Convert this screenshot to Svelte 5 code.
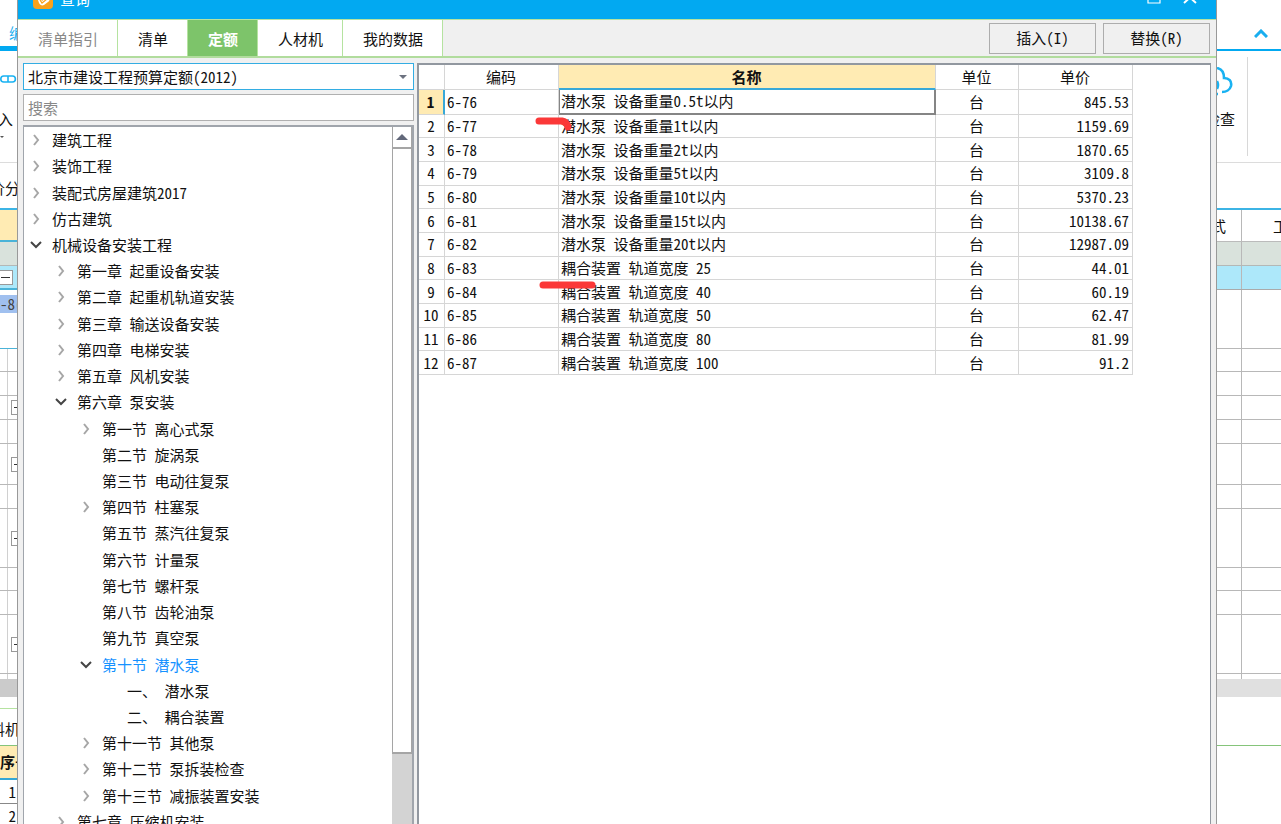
<script lang="ts">
  type TreeNode = {
    label: string;
    level: number;
    state?: 'open' | 'closed';
    active?: boolean;
  };

  type Quota = { code: string; name: string; unit: string; price: string };

  const tabs = [
    { id: 'guide', label: '清单指引', muted: true },
    { id: 'list', label: '清单' },
    { id: 'quota', label: '定额' },
    { id: 'labor', label: '人材机' },
    { id: 'mine', label: '我的数据' },
  ];

  const tree: TreeNode[] = [
    { label: '建筑工程', level: 0, state: 'closed' },
    { label: '装饰工程', level: 0, state: 'closed' },
    { label: '装配式房屋建筑2017', level: 0, state: 'closed' },
    { label: '仿古建筑', level: 0, state: 'closed' },
    { label: '机械设备安装工程', level: 0, state: 'open' },
    { label: '第一章 起重设备安装', level: 1, state: 'closed' },
    { label: '第二章 起重机轨道安装', level: 1, state: 'closed' },
    { label: '第三章 输送设备安装', level: 1, state: 'closed' },
    { label: '第四章 电梯安装', level: 1, state: 'closed' },
    { label: '第五章 风机安装', level: 1, state: 'closed' },
    { label: '第六章 泵安装', level: 1, state: 'open' },
    { label: '第一节 离心式泵', level: 2, state: 'closed' },
    { label: '第二节 旋涡泵', level: 2 },
    { label: '第三节 电动往复泵', level: 2 },
    { label: '第四节 柱塞泵', level: 2, state: 'closed' },
    { label: '第五节 蒸汽往复泵', level: 2 },
    { label: '第六节 计量泵', level: 2 },
    { label: '第七节 螺杆泵', level: 2 },
    { label: '第八节 齿轮油泵', level: 2 },
    { label: '第九节 真空泵', level: 2 },
    { label: '第十节 潜水泵', level: 2, state: 'open', active: true },
    { label: '一、 潜水泵', level: 3 },
    { label: '二、 耦合装置', level: 3 },
    { label: '第十一节 其他泵', level: 2, state: 'closed' },
    { label: '第十二节 泵拆装检查', level: 2, state: 'closed' },
    { label: '第十三节 减振装置安装', level: 2, state: 'closed' },
    { label: '第七章 压缩机安装', level: 1, state: 'closed' },
  ];

  const quotas: Quota[] = [
    { code: '6-76', name: '潜水泵 设备重量0.5t以内', unit: '台', price: '845.53' },
    { code: '6-77', name: '潜水泵 设备重量1t以内', unit: '台', price: '1159.69' },
    { code: '6-78', name: '潜水泵 设备重量2t以内', unit: '台', price: '1870.65' },
    { code: '6-79', name: '潜水泵 设备重量5t以内', unit: '台', price: '3109.8' },
    { code: '6-80', name: '潜水泵 设备重量10t以内', unit: '台', price: '5370.23' },
    { code: '6-81', name: '潜水泵 设备重量15t以内', unit: '台', price: '10138.67' },
    { code: '6-82', name: '潜水泵 设备重量20t以内', unit: '台', price: '12987.09' },
    { code: '6-83', name: '耦合装置 轨道宽度 25', unit: '台', price: '44.01' },
    { code: '6-84', name: '耦合装置 轨道宽度 40', unit: '台', price: '60.19' },
    { code: '6-85', name: '耦合装置 轨道宽度 50', unit: '台', price: '62.47' },
    { code: '6-86', name: '耦合装置 轨道宽度 80', unit: '台', price: '81.99' },
    { code: '6-87', name: '耦合装置 轨道宽度 100', unit: '台', price: '91.2' },
  ];

  // rows of the sheet behind the dialog, seen on both sides of it
  const sheetRows = [
    { height: 23 },
    { height: 24 },
    { height: 24, fold: true },
    { height: 24 },
    { height: 41, fold: true },
    { height: 24 },
    { height: 59, fold: true },
    { height: 23 },
    { height: 24 },
    { height: 59, fold: true },
  ];

  let activeTab = $state('quota');
  let selectedRow = $state(0);
  let library = $state('北京市建设工程预算定额(2012)');
  let keyword = $state('');
</script>

<div class="screen">
  <aside class="behind left">
    <div class="menu"><span>编制</span></div>
    <div class="tools">
      <svg width="17" height="10" viewBox="0 0 17 10" fill="none" stroke="#19b2f2" stroke-width="1.6" aria-hidden="true">
        <rect x="0.8" y="2" width="14.6" height="6" rx="3" />
        <path d="M8 2v6" />
      </svg>
      <span>导入</span>
      <svg class="drop" width="6" height="4" viewBox="0 0 6 4" aria-hidden="true"><path d="M0 0h4L2 2z" fill="#555" /></svg>
    </div>
    <div class="subtabs"><span>价分</span></div>
    <div class="head"></div>
    <div class="total"></div>
    <div class="current"><i class="fold"></i></div>
    <div class="editing"><span>-8(</span></div>
    {#each sheetRows as row}
      <div class="sheetRow" style:height="{row.height}px">
        {#if row.fold}<i class="fold"></i>{/if}
      </div>
    {/each}
    <div class="sheetEnd"></div>
    <div class="hscroll"></div>
    <div class="lowerTabs"><span>料机</span></div>
    <div class="lowerHead">序号</div>
    <div class="num">1</div>
    <div class="num">2</div>
  </aside>

  <main class="dialog">
    <header class="titlebar">
      <div class="caption">
        <svg width="20" height="20" viewBox="0 0 20 20" aria-hidden="true">
          <rect width="20" height="20" rx="4" fill="#f8a21c" />
          <path d="M4 8l2 6c1 2 3 3 5 2l4-3c2-1 2-4 1-6l-7 5-2-3z" fill="#fff" />
          <path d="M7 11l2 3 5-4" fill="none" stroke="#f8a21c" stroke-width="1.2" />
        </svg>
        <h1>查询</h1>
        <button class="winButton" type="button" aria-label="最大化">
          <svg width="14" height="14" viewBox="0 0 14 14"><path d="M1 1h12v10H1z" fill="none" stroke="#fff" stroke-width="1.2" /></svg>
        </button>
        <button class="winButton" type="button" aria-label="关闭">
          <svg width="14" height="14" viewBox="0 0 14 14"><path d="M1 0l12 11M13 0L1 11" fill="none" stroke="#fff" stroke-width="2" /></svg>
        </button>
      </div>
    </header>

    <nav class="tabbar">
      {#each tabs as tab}
        <button
          class="tab"
          class:muted={tab.muted}
          class:selected={tab.id === activeTab}
          type="button"
          onclick={() => (activeTab = tab.id)}
        >{tab.label}</button>
      {/each}
      <div class="actions">
        <button class="action" type="button">插入(I)</button>
        <button class="action" type="button">替换(R)</button>
      </div>
    </nav>

    <div class="body">
      <section class="side">
        <div class="selectWrap">
          <select class="select" aria-label="定额库" bind:value={library}>
            <option>北京市建设工程预算定额(2012)</option>
          </select>
          <svg class="caret" width="8" height="4" viewBox="0 0 8 4" aria-hidden="true"><path d="M0 0h8L4 4z" fill="#6c7280" /></svg>
        </div>
        <input class="search" type="text" placeholder="搜索" aria-label="搜索" bind:value={keyword} />

        <div class="treeBox">
          <ul class="tree">
            {#each tree as node}
              <li>
                <button class="node level{node.level}" class:active={node.active} type="button">
                  <svg class="twist" width="12" height="12" viewBox="0 0 12 12" fill="none" stroke-width="2" aria-hidden="true">
                    {#if node.state === 'closed'}
                      <path d="M4 1l4 5-4 5" stroke="#a6a6a6" />
                    {:else if node.state === 'open'}
                      <path d="M1 3l5 5 5-5" stroke="#454545" />
                    {/if}
                  </svg>
                  {node.label}
                </button>
              </li>
            {/each}
          </ul>
          <div class="scrollbar">
            <button class="scrollUp" type="button" aria-label="向上滚动">
              <svg width="12" height="6" viewBox="0 0 12 6"><path d="M0 6h12L6 0z" fill="#62687a" /></svg>
            </button>
            <div class="thumb"></div>
          </div>
        </div>
      </section>

      <section class="grid">
        <table>
          <colgroup>
            <col class="colNo" />
            <col class="colCode" />
            <col class="colName" />
            <col class="colUnit" />
            <col class="colPrice" />
          </colgroup>
          <thead>
            <tr>
              <th></th>
              <th>编码</th>
              <th class="sorted">名称</th>
              <th>单位</th>
              <th>单价</th>
            </tr>
          </thead>
          <tbody>
            {#each quotas as quota, i}
              <tr class:picked={i === selectedRow} onclick={() => (selectedRow = i)}>
                <td class="no">{i + 1}</td>
                <td>{quota.code}</td>
                <td class="name">{quota.name}</td>
                <td class="unit">{quota.unit}</td>
                <td class="price">{quota.price}</td>
              </tr>
            {/each}
          </tbody>
        </table>
        <!-- red pen strokes over the code and name columns -->
        <svg class="marks" width="240" height="240" viewBox="0 0 240 240" fill="none" stroke="#fb3838" stroke-width="7" stroke-linecap="round" stroke-linejoin="round" aria-hidden="true">
          <path d="M120 56h23q5 1 6 6" />
          <path d="M124 220h49" />
        </svg>
      </section>
    </div>
  </main>

  <aside class="behind right">
    <div class="menu">
      <svg width="14" height="9" viewBox="0 0 14 9" fill="none" stroke="#19aeef" stroke-width="3" aria-hidden="true"><path d="M1 8l6-6 6 6" /></svg>
    </div>
    <div class="tools">
      <div class="check">
        <svg width="30" height="32" viewBox="0 0 30 32" fill="none" stroke="#19b2f2" stroke-width="2.6" aria-hidden="true">
          <path d="M0 1c5 1 7 5 7 10 5 0 8 3 7 8-1 4-5 6-9 6" />
          <path d="M0 14q2 4 0 8M0 27h1" />
        </svg>
        <span>检查</span>
      </div>
    </div>
    <div class="subtabs"></div>
    <div class="head cells"><span>式</span><span>工</span></div>
    <div class="total cells"><span></span><span></span></div>
    <div class="current cells"><span></span><span></span></div>
    <div class="editing cells"><span></span><span></span></div>
    {#each sheetRows as row}
      <div class="sheetRow cells" style:height="{row.height}px"><span></span><span></span></div>
    {/each}
    <div class="sheetEnd cells"><span></span><span></span></div>
    <div class="hscroll"></div>
    <div class="lowerTabs"></div>
  </aside>
</div>

<style>
  :global(body) {
    background: #fff;
  }

  .screen,
  .screen * {
    box-sizing: border-box;
  }

  .screen {
    display: grid;
    grid-template-columns: 17px minmax(0, 1fr) 64px;
    height: 100vh;
    overflow: hidden;
    font-family: 'Noto Sans Mono CJK SC', 'Liberation Mono', 'Noto Sans CJK SC', monospace;
    font-size: 15px;
    line-height: 20px;
    color: #111;
  }

  button,
  input,
  select {
    font: inherit;
    color: inherit;
    margin: 0;
    padding: 0;
    border: 0;
    border-radius: 0;
    background: none;
  }

  svg {
    display: block;
    flex: none;
  }

  /* application window behind the dialog */
  .behind {
    min-width: 0;
    overflow: hidden;
  }

  .behind > div {
    display: flex;
    align-items: center;
    overflow: hidden;
    white-space: nowrap;
  }

  .behind .menu {
    height: 51px;
    align-items: flex-end;
    border-bottom: 2px solid #02a9f1;
  }

  .left .menu {
    padding: 0 0 3px 9px;
    border-bottom-width: 5px;
    color: #19aeef;
  }

  .right .menu {
    justify-content: flex-end;
    padding: 0 13px 11px 0;
  }

  .behind .tools {
    height: 112px;
    border-bottom: 1px solid #dcdcdc;
  }

  .left .tools {
    flex-direction: column;
    align-items: flex-end;
    padding-top: 23px;
    gap: 25px;
  }

  .left .tools span {
    padding-right: 4px;
  }

  .left .tools .drop {
    align-self: flex-start;
    margin-top: -18px;
  }

  .right .tools {
    padding: 6px 0;
    align-items: stretch;
  }

  .check {
    display: flex;
    flex-direction: column;
    align-items: flex-end;
    width: 31px;
    padding: 10px 12px 0 0;
    gap: 10px;
    border-right: 1px solid #d8d8d8;
  }

  .check svg {
    margin-right: -12px;
  }

  .behind .subtabs {
    height: 47px;
    justify-content: flex-end;
    padding-top: 4px;
    border-bottom: 2px solid #3cb4e5;
  }

  /* labels that run on under the dialog's edge */
  .subtabs span,
  .lowerTabs span {
    margin-right: -3px;
  }

  .behind .head {
    height: 32px;
    border-bottom: 1px solid #bbb;
  }

  .left .head {
    background: #ffebb3;
    border-bottom: 2px solid #4ab3d8;
  }

  .behind .total {
    height: 24px;
    background: #d9e2dc;
    border-bottom: 1px solid #b4b8b6;
  }

  .behind .current {
    height: 24px;
    background: #ade8fa;
    border-bottom: 1px solid #aaa;
  }

  .left .current {
    border-bottom: 2px solid #4ab3d8;
  }

  .left .current .fold {
    margin-left: -2px;
  }

  .behind .editing {
    height: 59px;
    border-bottom: 1px solid #b8b8b8;
  }

  .left .editing {
    align-items: flex-start;
    padding-top: 5px;
    border-bottom-color: #4ab3d8;
  }

  .left .editing span {
    flex: none;
    width: 24px;
    line-height: 18px;
    background: #a0c0ef;
    color: #444;
  }

  .behind .sheetRow {
    border-bottom: 1px solid #b8b8b8;
  }

  .left .sheetRow,
  .left .sheetEnd {
    padding-left: 11px;
    background: linear-gradient(#d0d0d0, #d0d0d0) 7px 0 / 1px 100% no-repeat;
  }

  .fold {
    flex: none;
    width: 15px;
    height: 15px;
    border: 1px solid #999;
    background: linear-gradient(#333, #333) center / 9px 1px no-repeat #fff;
  }

  .behind .sheetEnd {
    height: 5px;
  }

  .behind .hscroll {
    height: 18px;
    background: #e0e0e0;
  }

  .left .hscroll {
    background: #cbcbcb;
  }

  .behind .lowerTabs {
    height: 49px;
    justify-content: flex-end;
    padding-top: 16px;
    border-bottom: 1px solid #85c47a;
  }

  .left .lowerTabs {
    background: linear-gradient(#b5e3a0, #b5e3a0) 0 11px / 100% 1px no-repeat;
  }

  .behind .lowerHead {
    height: 34px;
    background: #ffebb3;
    border-bottom: 2px solid #35a7d5;
    font-weight: bold;
  }

  .behind .num {
    height: 24px;
    justify-content: flex-end;
    padding-right: 1px;
    border-bottom: 1px solid #888;
  }

  .cells span {
    align-self: stretch;
    display: flex;
    flex: 1;
    align-items: center;
    padding-left: 31px;
  }

  .cells span:first-child {
    flex: 0 0 25px;
    justify-content: flex-end;
    overflow: hidden;
    padding: 0 15px 0 0;
    border-right: 1px solid #b8b8b8;
  }

  /* dialog */
  .dialog {
    display: flex;
    flex-direction: column;
    min-width: 0;
    min-height: 0;
    background: #f0f0f0;
    border: solid #999;
    border-width: 0 1px;
  }

  .titlebar {
    display: flex;
    align-items: flex-end;
    flex: none;
    height: 19px;
    overflow: hidden;
    background: #02a9f1;
    color: #fff;
  }

  .caption {
    display: flex;
    align-items: center;
    flex: 1;
    height: 40px;
    padding: 0 19px 0 15px;
  }

  h1 {
    flex: 1;
    margin: 0 0 0 7px;
    font-size: 15px;
    font-weight: normal;
  }

  .winButton {
    margin-left: 22px;
  }

  .tabbar {
    display: flex;
    flex: none;
    height: 39px;
    border-top: 1px solid #b5e3a0;
    border-bottom: 2px solid #b1dc9d;
  }

  .tab {
    padding: 2px 19px 0 20px;
    background: #fff;
    border-right: 1px solid #b5e3a0;
    white-space: nowrap;
  }

  .tab.muted {
    color: #888;
  }

  .tab.selected {
    background: #7dc46a;
    color: #fff;
    font-weight: bold;
  }

  .actions {
    display: flex;
    align-items: center;
    gap: 7px;
    margin-left: auto;
    padding-right: 6px;
  }

  .action {
    width: 107px;
    height: 31px;
    border: 1px solid #adadad;
  }

  .body {
    display: flex;
    flex: 1;
    min-height: 0;
    gap: 3px;
    padding: 5px 5px 0;
  }

  .side {
    display: flex;
    flex-direction: column;
    flex: none;
    width: 391px;
    gap: 4px;
  }

  .selectWrap {
    display: grid;
    align-items: center;
    height: 27px;
    border: 1px solid #33ade3;
    background: #fff;
  }

  .select,
  .caret {
    grid-area: 1 / 1;
  }

  .select {
    appearance: none;
    height: 25px;
    padding: 0 4px;
    border: 0;
    outline: none;
  }

  .caret {
    justify-self: end;
    margin-right: 6px;
    pointer-events: none;
  }

  .search {
    flex: none;
    height: 27px;
    padding: 0 4px;
    border: 1px solid #b0b0b0;
    background: #fff;
  }

  .search::placeholder {
    color: #888;
    opacity: 1;
  }

  .treeBox {
    display: flex;
    flex: 1;
    min-height: 0;
    overflow: hidden;
    background: #fff;
    border: solid #a0a5ac;
    border-width: 2px 2px 0 1px;
  }

  .tree {
    display: grid;
    grid-auto-rows: 1fr;
    flex: 1;
    height: 708px;
    margin: 0;
    padding: 0;
    list-style: none;
  }

  .node {
    display: flex;
    align-items: center;
    width: 100%;
    height: 100%;
    gap: 10px;
    white-space: nowrap;
    text-align: left;
  }

  .level0 {
    padding-left: 6px;
  }

  .level1 {
    padding-left: 31px;
  }

  .level2 {
    padding-left: 56px;
  }

  .level3 {
    padding-left: 81px;
  }

  .node.active {
    color: #1592ff;
  }

  .scrollbar {
    display: flex;
    flex-direction: column;
    flex: none;
    width: 20px;
    background: #d3d3d3;
  }

  .scrollUp {
    display: grid;
    place-items: center;
    flex: none;
    height: 21px;
    background: #fff;
    border: 1px solid #a5a5a5;
    border-top: 0;
  }

  .thumb {
    height: 87%;
    background: #fff;
    border: solid #a5a5a5;
    border-width: 1px 1px 2px;
  }

  .grid {
    position: relative;
    flex: 1;
    min-width: 0;
    background: #fff;
    border: solid #9298a0;
    border-width: 2px 1px 0 2px;
  }

  table {
    table-layout: fixed;
    width: calc(100% - 77px);
    height: 310px;
    border-collapse: separate;
    border-spacing: 0;
  }

  .colNo {
    width: 26px;
  }

  .colCode {
    width: 114px;
  }

  .colUnit {
    width: 83px;
  }

  .colPrice {
    width: 114px;
  }

  th,
  td {
    padding: 0 3px 0 2px;
    border: solid #d6d6d6;
    border-width: 0 1px 1px 0;
    font-weight: normal;
    line-height: 20px;
    white-space: nowrap;
  }

  th {
    height: 25px;
  }

  .sorted {
    background: #ffebb3;
    border-bottom: 2px solid #38a8d8;
    font-weight: bold;
  }

  .no,
  .unit {
    text-align: center;
  }

  .price {
    text-align: right;
  }

  .picked .no {
    background: #ffebb3;
    border-right: 2px solid #38a8d8;
    font-weight: bold;
  }

  .picked .name {
    border: solid #858585;
    border-width: 0 2px 2px 1px;
    padding-left: 1px;
  }

  .marks {
    position: absolute;
    top: 0;
    left: 0;
    pointer-events: none;
  }
</style>
